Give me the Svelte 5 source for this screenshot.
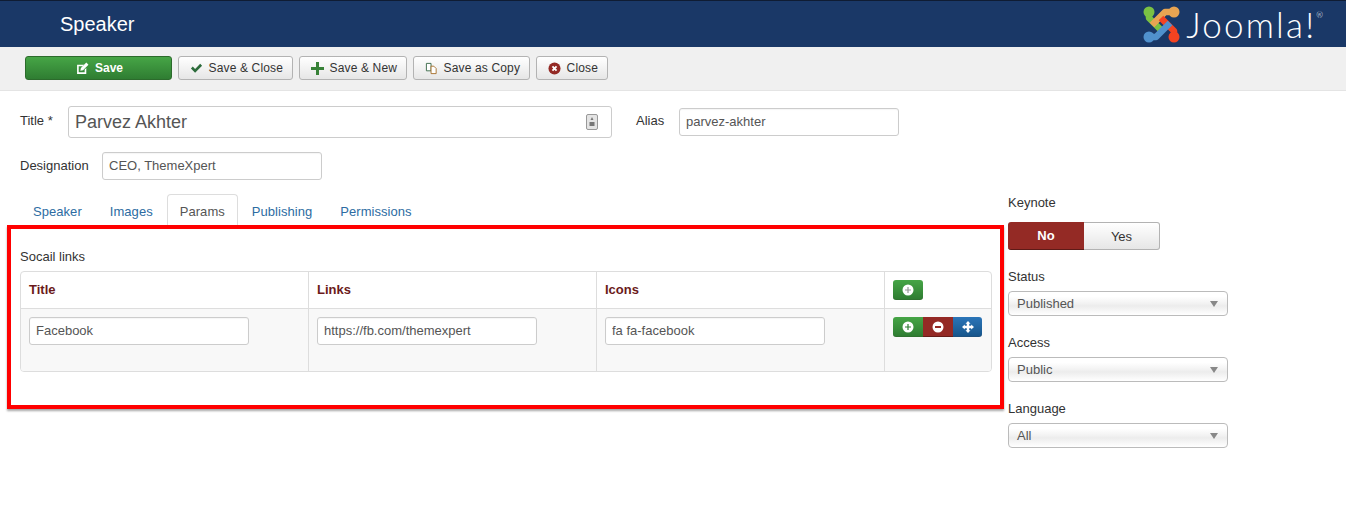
<script>
	const tabs = ['Speaker', 'Images', 'Params', 'Publishing', 'Permissions'];
	const activeTab = 2;
	const columns = ['Title', 'Links', 'Icons'];
	const links = ['Facebook', 'https://fb.com/themexpert', 'fa fa-facebook'];
	const selects = [
		{ label: 'Status', value: 'Published' },
		{ label: 'Access', value: 'Public' },
		{ label: 'Language', value: 'All' }
	];
</script>

{#snippet plusIcon(sign)}
	<svg class="round" viewBox="0 0 12 12"><circle cx="6" cy="6" r="5.5" fill="#fff" /><path d="M3 6h6M6 3v6" stroke={sign} stroke-width="1.2" /></svg>
{/snippet}

<header class="topbar">
	<h1>Speaker</h1>
	<div class="brand">
		<svg viewBox="0 0 40 40" width="40" height="40" fill="none" stroke-width="6.5">
			<circle cx="8" cy="8" r="5.500" fill="#7ac143" />
			<path d="M8 8 V14 L20 26" stroke="#7ac143" stroke-linejoin="round" />
			<path d="M33 8 H24 L11 21" stroke="#e8a452" stroke-linejoin="round" />
			<circle cx="33" cy="8" r="5.500" fill="#e8a452" />
			<path d="M33 33 V27 L20 14" stroke="#f44321" stroke-linejoin="round" />
			<circle cx="33" cy="33" r="5.500" fill="#f44321" />
			<path d="M8 33 H15 L29 19" stroke="#5091cd" stroke-linejoin="round" />
			<circle cx="8" cy="33" r="5.500" fill="#5091cd" />
		</svg>
		<span class="wordmark">Joomla!<sup>®</sup></span>
	</div>
</header>

<nav class="toolbar">
	<button class="btn save">
		<svg viewBox="0 0 12 12" width="13" height="13"><path d="M1 2.500h6.500L6 4H2.500v5.500h5.500V7l1.500-1.500V11H1z" fill="#fff" /><path d="M4 8l.5-2.500L9.500.5l2 2-5 5z" fill="#fff" /></svg>
		Save
	</button>
	<button class="btn">
		<svg viewBox="0 0 14 12" width="13" height="12"><path d="M1 6.500 3 4.500 5.500 7 11 1.500l2 2L5.500 11z" fill="#2c6b3b" /></svg>
		Save &amp; Close
	</button>
	<button class="btn">
		<svg viewBox="0 0 13 13" width="13" height="13"><path d="M5 0h3v5h5v3H8v5H5V8H0V5h5z" fill="#378137" /></svg>
		Save &amp; New
	</button>
	<button class="btn">
		<svg viewBox="0 0 14 14" width="13" height="13" fill="#fff" stroke="#3a6a4a"><path d="M1.500 1.500h5v8h-5z" /><path d="M6.500 4.500h3l2.500 2.500v5.500H6.500z" stroke="#a8702c" /></svg>
		Save as Copy
	</button>
	<button class="btn">
		<svg viewBox="0 0 14 14" width="13" height="13"><circle cx="7" cy="7" r="6.500" fill="#942a25" /><path d="M4.800 4.800l4.400 4.400M9.200 4.800l-4.400 4.400" stroke="#fff" stroke-width="2" /></svg>
		Close
	</button>
</nav>

<main class="page">
	<div class="content">
		<div class="title-row">
			<label class="field-title" for="title">Title *</label>
			<div class="title-box">
				<input id="title" value="Parvez Akhter" />
				<svg viewBox="0 0 12 16" width="12" height="16"><rect x=".5" y=".5" width="11" height="15" rx="1.500" fill="#e4e4e4" stroke="#999" /><path d="M6 3l1.500 3h-3zM3.500 8h5v4h-5z" fill="#777" /></svg>
			</div>
			<label class="field-alias" for="alias">Alias</label>
			<input id="alias" class="text" value="parvez-akhter" />
		</div>

		<div class="designation-row">
			<label for="designation">Designation</label>
			<input id="designation" class="text" value="CEO, ThemeXpert" />
		</div>

		<ul class="tabs">
			{#each tabs as tab, i}
				<li class:active={i === activeTab}>{tab}</li>
			{/each}
		</ul>

		<section class="highlight">
			<div class="links-label">Socail links</div>
			<div class="grid">
				{#each columns as col}
					<div class="head">{col}</div>
				{/each}
				<div class="head tools">
					<span class="mini green single">{@render plusIcon('#999')}</span>
				</div>
				{#each links as value}
					<div class="cell"><input class="text" {value} /></div>
				{/each}
				<div class="cell tools">
					<div class="mini-group">
						<span class="mini green">{@render plusIcon('#2f7d32')}</span>
						<span class="mini red">
							<svg class="round" viewBox="0 0 12 12"><circle cx="6" cy="6" r="5.500" fill="#fff" /><path d="M3 6h6" stroke="#942a25" stroke-width="2" /></svg>
						</span>
						<span class="mini blue">
							<svg class="move" viewBox="0 0 12 12"><path d="M6 0l2.500 2.800H7.200v2h2V3.500L12 6 9.200 8.500V7.200h-2v2h1.300L6 12 3.500 9.200h1.300v-2h-2v1.300L0 6l2.800-2.500v1.300h2v-2H3.500z" fill="#fff" /></svg>
						</span>
					</div>
				</div>
			</div>
		</section>
	</div>

	<aside class="side">
		<div class="side-label keynote">Keynote</div>
		<div class="switch">
			<span class="no">No</span>
			<span class="yes">Yes</span>
		</div>
		{#each selects as sel}
			<div class="side-label">{sel.label}</div>
			<div class="select">
				<span>{sel.value}</span>
				<i></i>
			</div>
		{/each}
	</aside>
</main>

<style>
	:global(body) {
		margin: 0;
		background: #fff;
		font-family: "Liberation Sans", Arial, sans-serif;
		font-size: 13px;
		color: #333;
	}

	.topbar {
		height: 46px;
		border-top: 1px solid #0f1c33;
		background: #1a3867;
		display: flex;
		align-items: center;
		justify-content: space-between;
		padding: 0 23px 0 60px;
	}

	h1 {
		margin: 0;
		color: #fff;
		font-size: 20px;
		font-weight: 400;
	}

	.brand {
		display: flex;
		align-items: center;
		gap: 5px;
	}

	.wordmark {
		font-family: "Lato", sans-serif;
		font-weight: 300;
		font-size: 35px;
		letter-spacing: 2.200px;
		line-height: 40px;
		color: #fff;
	}

	.wordmark sup {
		font-size: 8px;
		letter-spacing: 0;
		vertical-align: 20px;
		line-height: 0;
	}

	.toolbar {
		height: 44px;
		box-sizing: border-box;
		background: #f0f0f0;
		border-bottom: 1px solid #e4e4e4;
		padding: 9px 25px 0;
		display: flex;
		gap: 5.500px;
		align-items: flex-start;
	}

	.btn {
		height: 24px;
		padding: 0 9px 0 11px;
		display: flex;
		align-items: center;
		justify-content: center;
		gap: 6px;
		font: 12px "Liberation Sans", Arial, sans-serif;
		letter-spacing: .15px;
		color: #333;
		border: 1px solid #b3b3b3;
		border-radius: 3px;
		background: linear-gradient(#fff, #e6e6e6);
	}

	.btn.save {
		width: 147px;
		color: #fff;
		font-weight: 700;
		letter-spacing: 0;
		border-color: #2c6b2c;
		background: linear-gradient(#46a546, #2f7d32);
	}

	.page {
		display: flex;
		align-items: flex-start;
	}

	.content {
		width: 997px;
		margin-left: 7px;
		flex: none;
	}

	.title-row {
		display: flex;
		align-items: flex-start;
		padding-top: 15px;
	}

	.field-title {
		width: 48px;
		margin-left: 13px;
		padding-top: 6px;
		line-height: 18px;
	}

	.title-box {
		width: 544px;
		height: 32px;
		box-sizing: border-box;
		border: 1px solid #ccc;
		border-radius: 3px;
		display: flex;
		align-items: center;
		padding: 0 13px 0 6px;
	}

	.title-box input {
		flex: 1;
		min-width: 0;
		border: 0;
		padding: 0;
		outline: 0;
		font: 18px "Liberation Sans", Arial, sans-serif;
		color: #555;
	}

	.field-alias {
		width: 43px;
		margin-left: 24px;
		padding-top: 6px;
		line-height: 18px;
	}

	.title-row .text {
		margin-top: 2px;
	}

	.text {
		width: 220px;
		height: 28px;
		box-sizing: border-box;
		border: 1px solid #ccc;
		border-radius: 3px;
		padding: 0 6px 2px;
		font: 13px "Liberation Sans", Arial, sans-serif;
		color: #555;
		background: #fff;
		box-shadow: inset 0 1px 1px rgba(0, 0, 0, .04);
		display: block;
	}

	.designation-row {
		display: flex;
		align-items: center;
		margin-top: 14px;
		padding-left: 13px;
	}

	.designation-row label {
		width: 82px;
		margin-bottom: 2px;
	}

	.tabs {
		list-style: none;
		display: flex;
		margin: 14px 0 0 12px;
		padding: 0;
		height: 31px;
	}

	.tabs li {
		box-sizing: border-box;
		padding: 0 13px;
		line-height: 33px;
		height: 31px;
		color: #2d6ca2;
		border: 1px solid transparent;
		border-bottom: 0;
		letter-spacing: .05px;
		font-size: 13px;
	}

	.tabs li.active {
		color: #555;
		border-color: #ddd;
		border-radius: 4px 4px 0 0;
		background: #fff;
		padding: 0 12px;
	}

	.highlight {
		box-sizing: border-box;
		height: 184px;
		border: 4px solid #f00;
		padding: 19px 8px 0 9px;
		box-shadow: 0 2px 2px rgba(0, 0, 0, .35);
	}

	.links-label {
		line-height: 16px;
		margin: 1px 0 6px;
	}

	.grid {
		display: grid;
		grid-template-columns: 288px 288px 288px 1fr;
		grid-template-rows: 37px 62px;
		border: 1px solid #ddd;
		border-radius: 4px;
		overflow: hidden;
	}

	.head,
	.cell {
		box-sizing: border-box;
		padding: 8px;
		border-right: 1px solid #ddd;
	}

	.head {
		border-bottom: 1px solid #ddd;
		font-weight: 700;
		color: #6b1a1a;
		line-height: 20px;
	}

	.cell {
		background: #f8f8f8;
	}

	.tools {
		border-right: 0;
	}

	.mini-group {
		display: inline-flex;
		vertical-align: top;
	}

	.mini {
		width: 30px;
		height: 20px;
		display: flex;
		align-items: center;
		justify-content: center;
		box-sizing: border-box;
		border-bottom: 1px solid rgba(0, 0, 0, .3);
	}

	.mini.single {
		border-radius: 3px;
	}

	.mini-group .mini:first-child {
		border-radius: 3px 0 0 3px;
	}

	.mini-group .mini:last-child {
		width: 29px;
		border-radius: 0 3px 3px 0;
	}

	.green {
		background: linear-gradient(#46a546, #2f7d32);
	}

	.red {
		background: #942a25;
	}

	.blue {
		background: linear-gradient(#2b75b8, #17568c);
	}

	.round {
		width: 12px;
		height: 12px;
		display: block;
	}

	.move {
		width: 12px;
		height: 12px;
		display: block;
	}

	.side {
		margin-left: 4px;
		width: 220px;
		padding-top: 104px;
	}

	.side-label {
		line-height: 16px;
		margin: 19px 0 6px;
	}

	.side-label.keynote {
		margin: 0 0 11px;
	}

	.switch {
		display: flex;
		width: 152px;
		height: 28px;
		text-align: center;
		line-height: 27px;
	}

	.switch span {
		flex: 0 0 76px;
		box-sizing: border-box;
	}

	.no {
		background: #942a25;
		color: #fff;
		font-weight: 700;
		border-radius: 3px 0 0 3px;
		border-bottom: 1px solid #5e1a17;
	}

	.yes {
		background: linear-gradient(#fff, #e6e6e6);
		border: 1px solid #b3b3b3;
		border-left: 0;
		border-radius: 0 3px 3px 0;
	}

	.select {
		height: 25px;
		box-sizing: border-box;
		border: 1px solid #bbb;
		border-radius: 4px;
		padding: 0 8px;
		display: flex;
		align-items: center;
		justify-content: space-between;
		color: #555;
		background: linear-gradient(#fff 20%, #f2f2f2 50%, #ececec 60%, #fff);
	}

	.select i {
		width: 0;
		height: 0;
		border: 4px solid transparent;
		border-top: 6px solid #888;
		border-bottom: 0;
		margin-right: 1px;
	}
</style>
